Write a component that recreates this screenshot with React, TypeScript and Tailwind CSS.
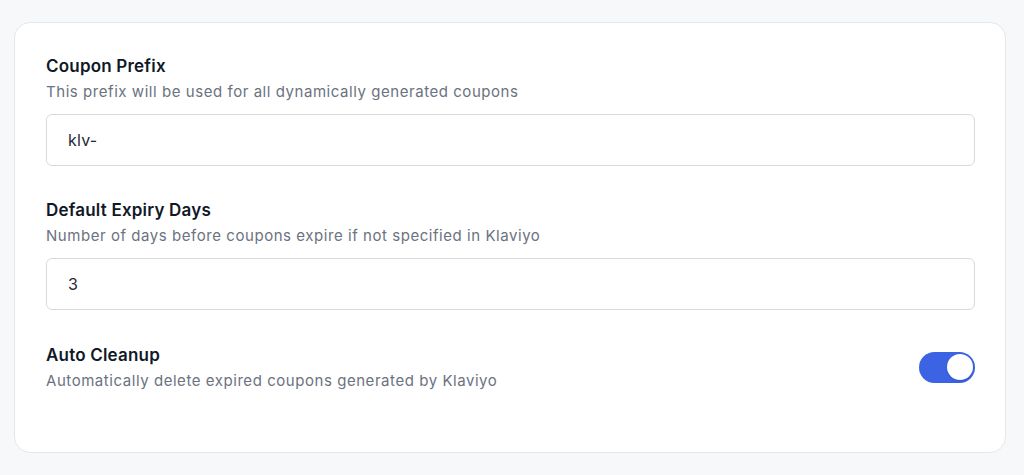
import { useState } from "react";

function Field({
  label,
  hint,
  value,
}: {
  label: string;
  hint: string;
  value: string;
}) {
  return (
    <div>
      <label className="block text-[17px] font-semibold leading-6 tracking-[0.2px] text-[#111827]">
        {label}
      </label>
      <p className="mt-1 text-[15px] leading-5 tracking-[0.55px] text-[#6b7280]">{hint}</p>
      <input
        defaultValue={value}
        className="mt-3 block h-[52px] w-full rounded-md border border-[#d7dbe0] bg-white px-[21px] text-base tracking-[0.2px] text-[#1f2937] outline-none"
      />
    </div>
  );
}

export default function App() {
  const [on, setOn] = useState(true);

  return (
    <div
      className="min-h-[475px] bg-[#f7f8fa] pt-[22px] pl-[14px] pr-[18px]"
      style={{ fontFamily: "Inter, 'Noto Sans', sans-serif" }}
    >
      <div className="rounded-2xl border border-[#e5e7eb] bg-white pl-[31px] pr-[30px] pt-[31px] pb-[61px]">
        <div className="flex flex-col">
          <Field
            label="Coupon Prefix"
            hint="This prefix will be used for all dynamically generated coupons"
            value="klv-"
          />
          <div className="mt-8">
            <Field
              label="Default Expiry Days"
              hint="Number of days before coupons expire if not specified in Klaviyo"
              value="3"
            />
          </div>
          <div className="mt-[33px] flex items-center justify-between">
            <div>
              <div className="text-[17px] font-semibold leading-6 tracking-[0.2px] text-[#111827]">
                Auto Cleanup
              </div>
              <p className="mt-1 text-[15px] leading-5 tracking-[0.55px] text-[#6b7280]">
                Automatically delete expired coupons generated by Klaviyo
              </p>
            </div>
            <button
              type="button"
              onClick={() => setOn(!on)}
              className={`flex h-[31px] w-[56px] items-center rounded-full p-[2.5px] ${
                on ? "justify-end bg-[#3b63e4]" : "justify-start bg-[#d1d5db]"
              }`}
            >
              <span className="block h-[26px] w-[26px] rounded-full bg-white shadow-sm" />
            </button>
          </div>
        </div>
      </div>
    </div>
  );
}
